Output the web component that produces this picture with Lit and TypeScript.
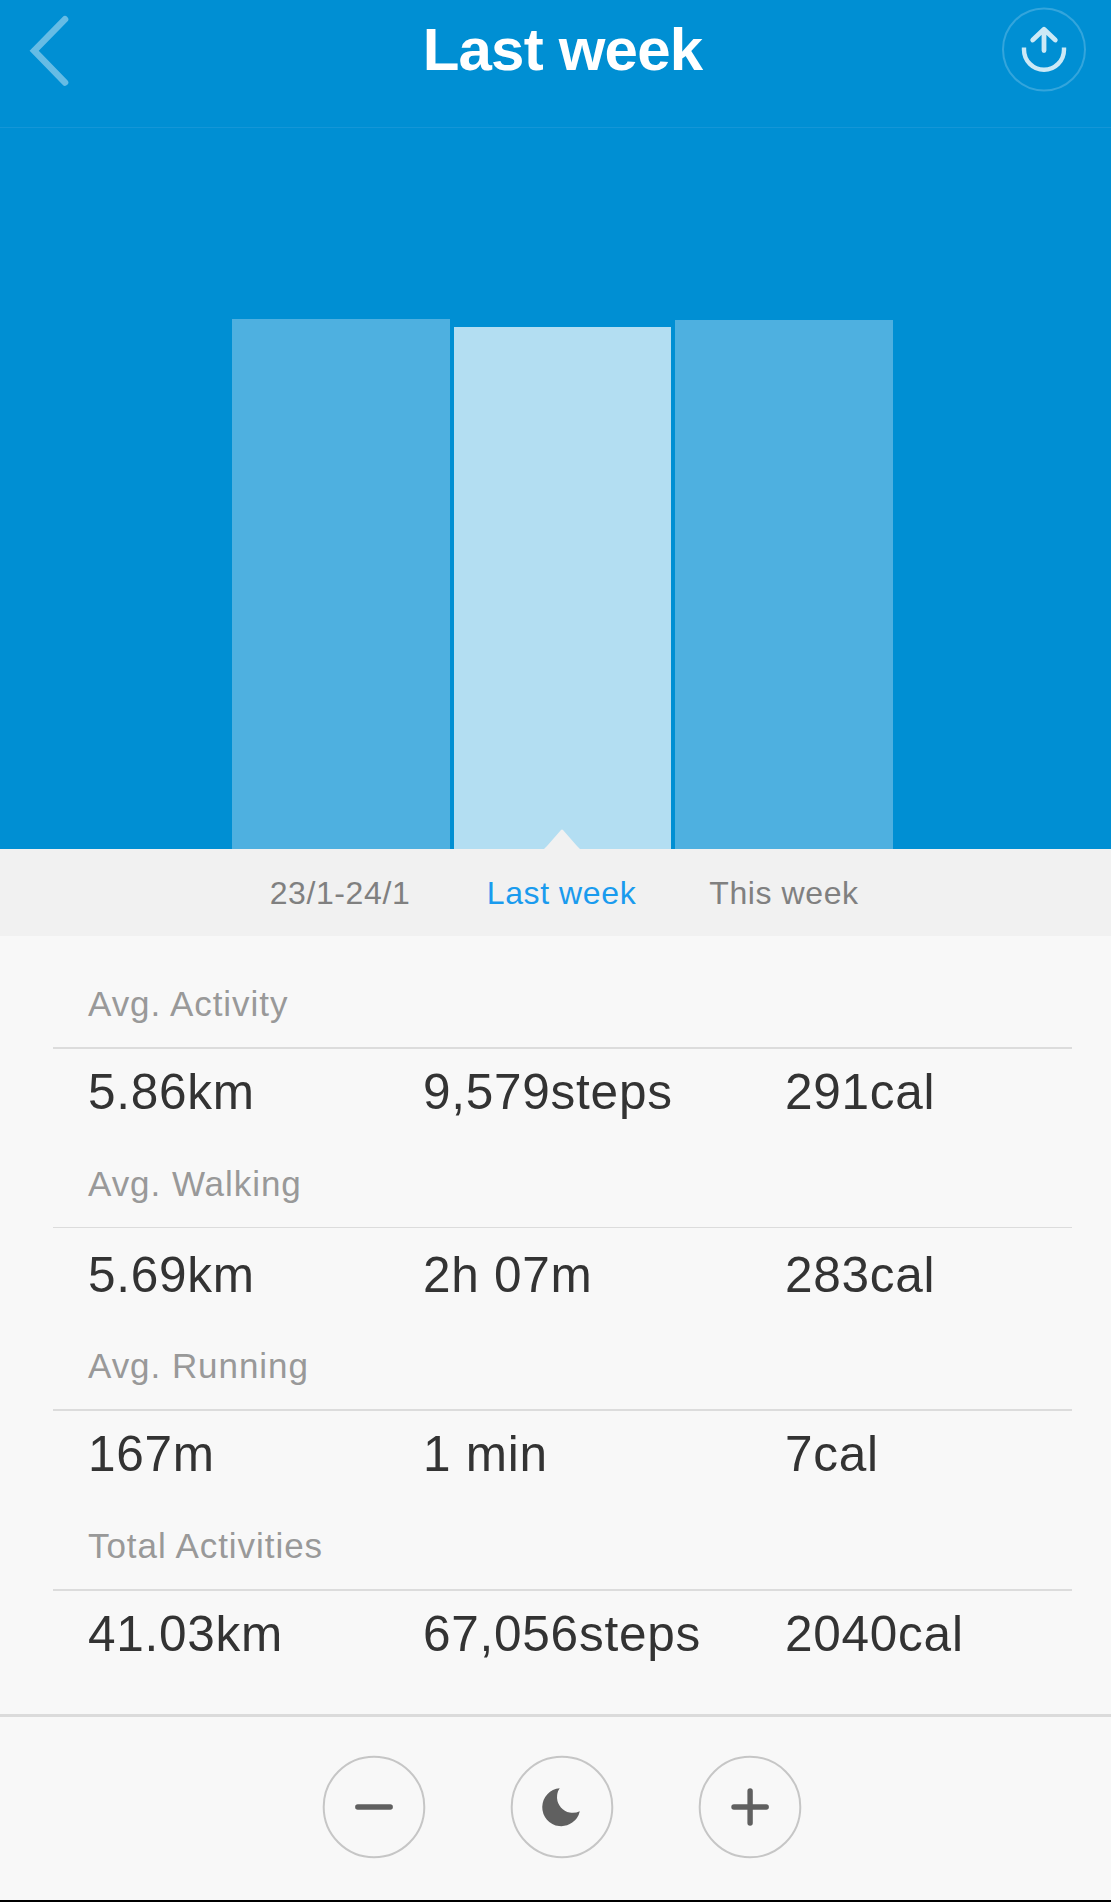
import { LitElement, html, svg, css } from "lit";
import { customElement, property } from "lit/decorators.js";
import { classMap } from "lit/directives/class-map.js";

interface Period {
  label: string;
  height: number;
  selected?: boolean;
}

interface Metric {
  title: string;
  values: string[];
  hairline?: boolean;
}

const PERIODS: Period[] = [
  { label: "23/1-24/1", height: 530 },
  { label: "Last week", height: 522, selected: true },
  { label: "This week", height: 529 },
];

const METRICS: Metric[] = [
  { title: "Avg. Activity", values: ["5.86km", "9,579steps", "291cal"] },
  { title: "Avg. Walking", values: ["5.69km", "2h 07m", "283cal"], hairline: true },
  { title: "Avg. Running", values: ["167m", "1 min", "7cal"] },
  { title: "Total Activities", values: ["41.03km", "67,056steps", "2040cal"] },
];

const ICONS = {
  minus: svg`<path d="M35.8 52H68.2" />`,
  moon: svg`<path class="solid" d="M49.7 33.2A19 19 0 1 0 69.8 56.2A15.8 15.8 0 0 1 49.7 33.2Z" />`,
  plus: svg`<path d="M36 52H68.2M52.1 36V68" />`,
};

@customElement("week-header")
export class WeekHeader extends LitElement {
  @property() heading = "";

  static styles = css`
    :host {
      display: grid;
      grid-template-columns: 200px 1fr 200px;
      height: 127px;
      border-bottom: 1px solid #1496d7;
    }
    .back {
      width: 80px;
      height: 100px;
    }
    .share {
      width: 100px;
      height: 100px;
      justify-self: end;
      margin-right: 17px;
    }
    .title {
      margin: 0;
      padding: 15px 0 0 14px;
      text-align: center;
      font-size: 60px;
      line-height: 70px;
      font-weight: 700;
      letter-spacing: -0.8px;
      color: #fff;
      white-space: nowrap;
    }
  `;

  render() {
    return html`
      <svg class="back" viewBox="0 0 80 100" fill="none" stroke="#66bce5" stroke-width="6.6" stroke-linecap="round">
        <path d="M65 19.3L34.2 50.7L65 82.5" />
      </svg>
      <h1 class="title">${this.heading}</h1>
      <svg class="share" viewBox="0 0 100 100" fill="none">
        <circle cx="50" cy="49.5" r="41" stroke="#33a5dc" stroke-width="2" />
        <path
          d="M50 50.5V30M38.7 40L50 29.3L61.3 40"
          stroke="#cce9f6"
          stroke-width="4.8"
          stroke-linecap="round"
          stroke-linejoin="round"
        />
        <path d="M30 47.5V49.7A20 20 0 0 0 70 49.7V47.5" stroke="#cce9f6" stroke-width="4.4" />
      </svg>
    `;
  }
}

@customElement("week-chart")
export class WeekChart extends LitElement {
  @property({ attribute: false }) periods: Period[] = [];

  static styles = css`
    :host {
      display: block;
    }
    .bars {
      display: grid;
      grid-template-columns: 218px 217px 218px;
      column-gap: 4px;
      align-items: end;
      height: 721px;
      padding-left: 232px;
    }
    .bar {
      position: relative;
      background: #4eb0e0;
    }
    .bar.selected {
      background: #b3def2;
    }
    .pointer {
      position: absolute;
      left: 90px;
      bottom: 0;
      width: 36px;
      height: 20px;
      display: block;
    }
    .tabs {
      display: grid;
      grid-template-columns: 216px 219px 218px;
      column-gap: 4px;
      height: 86px;
      padding: 1px 0 0 232px;
      background: #f1f1f1;
      text-align: center;
      font-size: 32px;
      line-height: 87px;
      letter-spacing: 0.6px;
      color: #808080;
      white-space: nowrap;
    }
    .tab.selected {
      color: #1a9bee;
    }
  `;

  render() {
    return html`
      <div class="bars">
        ${this.periods.map(
          (p) => html`<div class=${classMap({ bar: true, selected: !!p.selected })} style="height:${p.height}px">
            ${p.selected
              ? html`<svg class="pointer" viewBox="0 0 36 20"><path d="M0 20Q2 18 3 17L17 1Q18 0 19 1L33 17Q34 18 36 20Z" fill="#f1f1f1" /></svg>`
              : null}
          </div>`
        )}
      </div>
      <div class="tabs">
        ${this.periods.map((p) => html`<span class=${classMap({ tab: true, selected: !!p.selected })}>${p.label}</span>`)}
      </div>
    `;
  }
}

@customElement("metric-section")
export class MetricSection extends LitElement {
  @property({ attribute: false }) metric!: Metric;

  static styles = css`
    :host {
      display: block;
    }
    .title {
      margin: 0;
      padding: 0 0 22px 35px;
      font-size: 35px;
      line-height: 42px;
      font-weight: 400;
      letter-spacing: 0.95px;
      color: #999;
    }
    .values {
      display: grid;
      grid-template-columns: 335px 362px 1fr;
      height: 100px;
      padding: 14px 0 0 35px;
      border-top: 2px solid #dcdcdc;
      font-size: 49.5px;
      line-height: 58px;
      letter-spacing: 0.75px;
      color: #333;
      white-space: nowrap;
    }
    .values.hairline {
      height: 99px;
      padding-top: 18px;
      border-top-width: 1px;
    }
  `;

  render() {
    const { title, values, hairline } = this.metric;
    return html`
      <h2 class="title">${title}</h2>
      <div class=${classMap({ values: true, hairline: !!hairline })}>
        ${values.map((v) => html`<span>${v}</span>`)}
      </div>
    `;
  }
}

@customElement("app-root")
export class AppRoot extends LitElement {
  static styles = css`
    :host {
      display: flex;
      flex-direction: column;
      box-sizing: border-box;
      width: 1111px;
      height: 1902px;
      overflow: hidden;
      background: #f8f8f8;
      border-bottom: 2px solid #000;
      font-family: "Liberation Sans", Arial, sans-serif;
    }
    .hero {
      background: #008fd3;
    }
    .metrics {
      flex: 1;
      min-height: 0;
      padding: 47px 39px 0 53px;
    }
    .toolbar {
      display: flex;
      justify-content: center;
      gap: 84.3px;
      height: 145.5px;
      padding: 37.5px 0 0 13px;
      border-top: 3px solid #dbdbdb;
    }
    .action {
      width: 104px;
      height: 104px;
      padding: 0;
      border: 0;
      background: none;
    }
    .icon {
      display: block;
      width: 104px;
      height: 104px;
      fill: none;
      stroke: #606060;
      stroke-width: 5.4;
      stroke-linecap: round;
    }
    .icon .ring {
      stroke: #c6c6c6;
      stroke-width: 2;
    }
    .icon .solid {
      fill: #606060;
      stroke: none;
    }
  `;

  render() {
    return html`
      <div class="hero">
        <week-header heading="Last week"></week-header>
        <week-chart .periods=${PERIODS}></week-chart>
      </div>
      <div class="metrics">
        ${METRICS.map((m) => html`<metric-section .metric=${m}></metric-section>`)}
      </div>
      <div class="toolbar">
        ${Object.entries(ICONS).map(
          ([name, shape]) => html`<button class="action" aria-label=${name}>
            <svg class="icon" viewBox="0 0 104 104"><circle class="ring" cx="52" cy="52" r="50.3" />${shape}</svg>
          </button>`
        )}
      </div>
    `;
  }
}
